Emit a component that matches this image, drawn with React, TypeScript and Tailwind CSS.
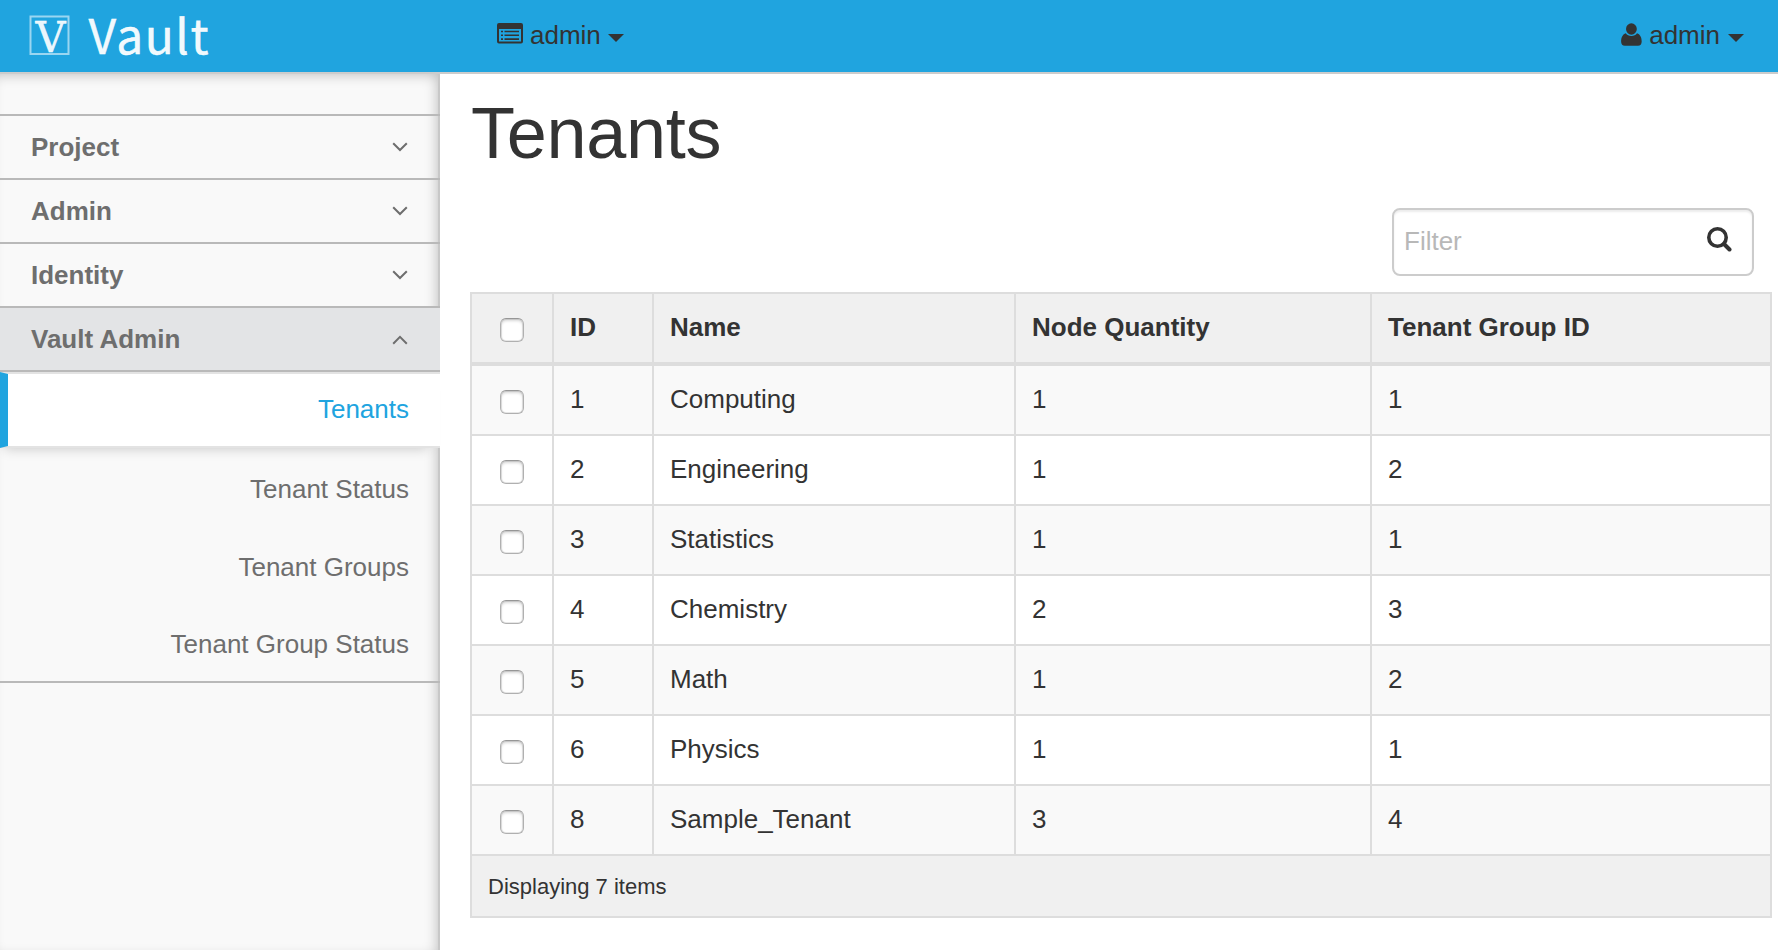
import React from "react";

const panels = ["Project", "Admin", "Identity"];
const links = ["Tenant Status", "Tenant Groups", "Tenant Group Status"];
const tenants = [
  { id: 1, name: "Computing", nodes: 1, group: 1 },
  { id: 2, name: "Engineering", nodes: 1, group: 2 },
  { id: 3, name: "Statistics", nodes: 1, group: 1 },
  { id: 4, name: "Chemistry", nodes: 2, group: 3 },
  { id: 5, name: "Math", nodes: 1, group: 2 },
  { id: 6, name: "Physics", nodes: 1, group: 1 },
  { id: 8, name: "Sample_Tenant", nodes: 3, group: 4 },
];

function Logo() {
  return (
    <svg width="220" height="72" viewBox="0 0 220 72" className="block shrink-0" fill="#fff">
      <rect x="30.5" y="16.5" width="38" height="37.5" fill="none" stroke="#fff" strokeOpacity="0.55" strokeWidth="2" />
      <text x="35.5" y="51.5" fontSize="43" textLength="30" lengthAdjust="spacingAndGlyphs" fontFamily="'DejaVu Serif', serif" stroke="#fff" strokeWidth="0.4" fillOpacity="0.92">
        V
      </text>
      <text x="88.5" y="53.5" fontSize="48" textLength="120" fontFamily="'Noto Sans CJK SC', 'Noto Sans', sans-serif" stroke="#fff" strokeWidth="0.4" fillOpacity="0.95">
        Vault
      </text>
    </svg>
  );
}

function ListIcon() {
  return (
    <svg width="26" height="21" viewBox="0 0 26 21" fill="#333">
      <path fillRule="evenodd" d="M2 0H24Q26 0 26 2V18.500Q26 20.500 24 20.500H2Q0 20.500 0 18.500V2Q0 0 2 0ZM2 6V18.500H24V6Z" />
      <path d="M4 7.700h2v1.600h-2zM7.500 7.700h14.500v1.600h-14.500zM4 11.500h2v1.600h-2zM7.500 11.500h14.500v1.600h-14.500zM4 15.300h2v1.600h-2zM7.500 15.300h14.500v1.600h-14.500z" />
    </svg>
  );
}

function UserIcon() {
  return (
    <svg width="21" height="23" viewBox="0 0 21 23" fill="#333">
      <ellipse cx="10.400" cy="6" rx="5.400" ry="5.800" />
      <path d="M4.800 10.300C6 12 8 13 10.400 13S14.800 12 16 10.300C19 11.200 20.700 14.500 20.700 18.500C20.700 21.300 19.300 22.700 17 22.700H3.800C1.500 22.700 0.100 21.300 0.100 18.500C0.100 14.500 1.800 11.200 4.800 10.300Z" />
    </svg>
  );
}

function Caret() {
  return (
    <svg width="16" height="8" viewBox="0 0 16 8" fill="#333">
      <path d="M0 0H16L8 8Z" />
    </svg>
  );
}

function SearchIcon() {
  return (
    <svg width="25" height="25" viewBox="0 0 25 25" fill="none" stroke="#333">
      <circle cx="10.500" cy="10.500" r="8.700" strokeWidth="3.600" />
      <path d="M17 17L22.500 22.500" strokeWidth="4" strokeLinecap="round" />
    </svg>
  );
}

function Chevron({ up = false }: { up?: boolean }) {
  return (
    <svg width="16" height="10" viewBox="0 0 16 10" fill="none" stroke="#6e6e6e" strokeWidth="2">
      <path d={up ? "M1.200 8.700L8 1.900L14.800 8.700" : "M1.200 1.200L8 8L14.800 1.200"} />
    </svg>
  );
}

function Checkbox() {
  return (
    <div className="mx-auto mt-[6px] size-6 rounded-[6px] border border-[#b0b0b0] border-t-[#969696] bg-white shadow-[inset_0_0_0_1px_rgba(0,0,0,0.09),inset_0_2px_3px_rgba(0,0,0,0.16)]" />
  );
}

const cell = "border-2 border-[#ddd] px-4";

export default function App() {
  return (
    <div className="flex h-[950px] w-[1778px] flex-col overflow-hidden bg-white font-['Liberation_Sans',Arial,sans-serif] text-[26px] leading-9 text-[#333]">
      <header className="flex h-[74px] shrink-0 border-b-2 border-[#ccc] bg-[#20a4df]">
        <Logo />
        <div className="flex flex-1 justify-between pr-[34px] pl-[277px]">
          <div className="flex h-[70px] items-center">
            <span className="mb-[3px]"><ListIcon /></span>
            <span className="ml-[7px]">admin</span>
            <span className="mt-[5px] ml-[7px]"><Caret /></span>
          </div>
          <div className="flex h-[70px] items-center">
            <span className="mb-px"><UserIcon /></span>
            <span className="ml-[7px]">admin</span>
            <span className="mt-[5px] ml-2"><Caret /></span>
          </div>
        </div>
      </header>

      <div className="flex min-h-0 flex-1">
        <nav className="w-[440px] shrink-0 bg-[#f9f9f9] pt-10 text-[#6e6e6e] shadow-[inset_-2px_0_0_#c8c8c8,inset_-6px_4px_14px_-4px_rgba(0,0,0,0.26)]">
          {panels.map((panel) => (
            <div key={panel} className="flex h-16 items-center justify-between border-t-2 border-[#b9b9b9] pr-8 pl-[31px] font-bold">
              <span>{panel}</span>
              <span className="mb-px"><Chevron /></span>
            </div>
          ))}
          <div className="flex h-[66px] items-center justify-between border-y-2 border-[#b9b9b9] bg-[#e3e4e6] pr-8 pl-[31px] font-bold">
            <span>Vault Admin</span>
            <span className="mt-px"><Chevron up /></span>
          </div>
          <div className="flex h-[76px] items-center justify-end border-y-2 border-l-8 border-y-[#e3e3e3] border-l-[#20a4df] bg-white pr-[31px] text-[#20a4df] shadow-[-4px_8px_12px_-8px_rgba(0,0,0,0.22)]">
            <span className="mb-[2px]">Tenants</span>
          </div>
          <div className="flex h-[235px] flex-col border-b-2 border-[#b9b9b9] pt-[2px]">
            {links.map((link) => (
              <div key={link} className="flex h-[77.500px] shrink-0 items-center justify-end pt-px pr-[31px]">{link}</div>
            ))}
          </div>
        </nav>

        <main className="flex-1 pl-[30px]">
          <h1 className="pt-[19px] pl-px text-[72px] leading-[80px] tracking-[-0.3px]">Tenants</h1>
          <div className="mt-[35px] ml-[922px] flex h-[68px] w-[362px] items-center justify-between rounded-lg border-2 border-[#ccc] bg-white pr-5 pb-[2px] pl-[10px] shadow-[inset_0_2px_2px_rgba(0,0,0,0.075)]">
            <span className="mb-px text-[#b8b8b8]">Filter</span>
            <span className="mb-[3px]"><SearchIcon /></span>
          </div>
          <table className="mt-4 w-[1302px] table-fixed border-collapse text-left">
            <colgroup>
              <col className="w-[82px]" />
              <col className="w-[100px]" />
              <col className="w-[362px]" />
              <col className="w-[356px]" />
              <col className="w-[400px]" />
            </colgroup>
            <thead>
              <tr className="h-[71px] bg-[#f0f0f0]">
                <th className={`${cell} border-b-4 pb-[2px]`}><Checkbox /></th>
                {["ID", "Name", "Node Quantity", "Tenant Group ID"].map((h) => (
                  <th key={h} className={`${cell} border-b-4 pb-[2px] font-bold`}>{h}</th>
                ))}
              </tr>
            </thead>
            <tbody>
              {tenants.map((t) => (
                <tr key={t.id} className="h-[70px] first:h-[71px] odd:bg-[#f9f9f9]">
                  <td className={`${cell} pb-[2px]`}><Checkbox /></td>
                  <td className={`${cell} pb-[2px]`}>{t.id}</td>
                  <td className={`${cell} pb-[2px]`}>{t.name}</td>
                  <td className={`${cell} pb-[2px]`}>{t.nodes}</td>
                  <td className={`${cell} pb-[2px]`}>{t.group}</td>
                </tr>
              ))}
            </tbody>
            <tfoot>
              <tr className="h-[62px] bg-[#f0f0f0]">
                <td colSpan={5} className={`${cell} pt-px text-[22px]`}>Displaying 7 items</td>
              </tr>
            </tfoot>
          </table>
        </main>
      </div>
    </div>
  );
}
